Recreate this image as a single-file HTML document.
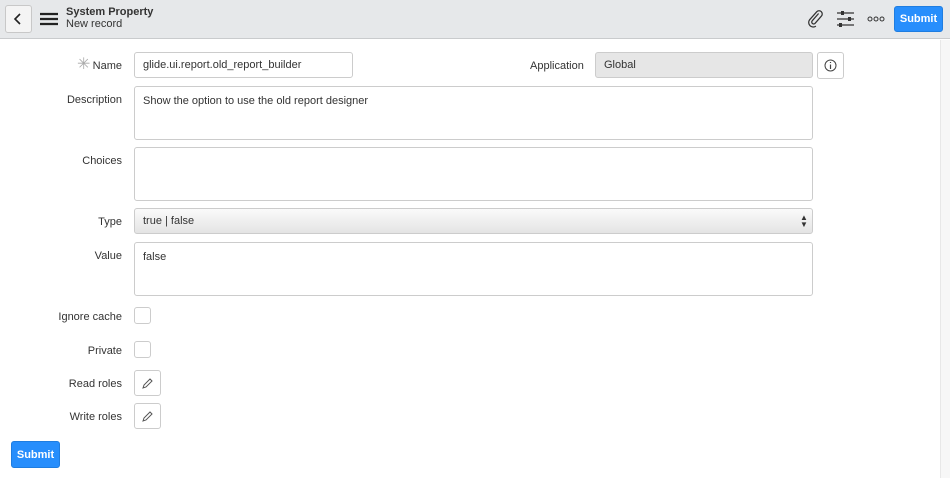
<!DOCTYPE html>
<html><head><style>
*{box-sizing:border-box;margin:0;padding:0}
body{width:950px;height:478px;background:#fff;font-family:"Liberation Sans",sans-serif;font-size:11px;color:#333;position:relative;overflow:hidden}
.a{position:absolute}
.hdr{left:0;top:0;width:950px;height:39px;background:#e6e8ea;border-bottom:1px solid #c9cbcd}
.lbl{right:828px;text-align:right;color:#333;white-space:nowrap}
.inp{border:1px solid #ccc;border-radius:3px;background:#fff;padding:0 8px}
.btn{background:#278efc;color:#fff;font-weight:bold;border:1px solid #1f7de0;border-radius:3px;text-align:center}
.cb{width:17px;height:17px;border:1px solid #ccc;border-radius:3px;background:#fff}
.rb{width:27px;height:26px;border:1px solid #ccc;border-radius:3px;background:#fff}
</style></head><body>
<div class="a hdr"></div>
<div class="a" style="left:5px;top:5px;width:27px;height:28px;border:1px solid #c8c8c8;border-radius:3px;background:#f4f4f4"></div>
<svg class="a" style="left:12px;top:12px" width="12" height="14"><path d="M8 2L3 7L8 12" stroke="#222" stroke-width="1.6" fill="none"/></svg>
<svg class="a" style="left:40px;top:12px" width="18" height="14"><path d="M0 2H18M0 7H18M0 12H18" stroke="#222" stroke-width="2.2"/></svg>
<div class="a" style="left:66px;top:6px;font-weight:bold;font-size:11px;color:#333">System Property</div>
<div class="a" style="left:66px;top:18px;font-size:11px;color:#333">New record</div>
<svg class="a" style="left:806px;top:9px" width="20" height="20"><path d="M14 5L7 13a2 2 0 0 0 3 3l7-8a3.5 3.5 0 0 0-5-5L4 12a5 5 0 0 0 7 7" stroke="#333" stroke-width="1.4" fill="none" transform="scale(.9)"/></svg>
<svg class="a" style="left:836px;top:11px" width="20" height="18"><path d="M1 2H18M1 8H18M1 14H18" stroke="#333" stroke-width="1.3"/><rect x="5" y="0" width="3" height="4" fill="#333"/><rect x="12" y="6" width="3" height="4" fill="#333"/><rect x="3" y="12" width="3" height="4" fill="#333"/></svg>
<svg class="a" style="left:867px;top:16px" width="18" height="6"><circle cx="3" cy="3" r="2" stroke="#333" fill="none"/><circle cx="9" cy="3" r="2" stroke="#333" fill="none"/><circle cx="15" cy="3" r="2" stroke="#333" fill="none"/></svg>
<div class="a btn" style="left:894px;top:6px;width:49px;height:26px;line-height:24px">Submit</div>
<div class="a" style="left:940px;top:40px;width:10px;height:438px;background:#f7f7f7;border-left:1px solid #e8e8e8"></div>

<div class="a" style="left:77px;top:58px;color:#aaa;font-size:16px;line-height:14px">✳</div>
<div class="a lbl" style="top:60px">Name</div>
<div class="a inp" style="left:134px;top:52px;width:219px;height:26px;line-height:25px">glide.ui.report.old_report_builder</div>
<div class="a" style="left:530px;top:60px">Application</div>
<div class="a inp" style="left:595px;top:52px;width:218px;height:26px;line-height:25px;background:#e6e6e6">Global</div>
<div class="a" style="left:817px;top:52px;width:27px;height:27px;border:1px solid #ccc;border-radius:3px"></div>
<svg class="a" style="left:824px;top:59px" width="13" height="13"><circle cx="6.5" cy="6.5" r="5.5" stroke="#444" fill="none"/><path d="M6.5 5.5V10M6.5 3V4" stroke="#444" stroke-width="1.2"/></svg>

<div class="a lbl" style="top:94px">Description</div>
<div class="a inp" style="left:134px;top:86px;width:679px;height:54px;padding-top:8px">Show the option to use the old report designer</div>
<div class="a lbl" style="top:155px">Choices</div>
<div class="a inp" style="left:134px;top:147px;width:679px;height:54px"></div>
<div class="a lbl" style="top:216px">Type</div>
<div class="a inp" style="left:134px;top:208px;width:679px;height:26px;line-height:25px;background:linear-gradient(#fafafa,#e4e4e4)">true | false</div>
<div class="a" style="left:800px;top:214px;font-size:8px;line-height:7px;color:#333">▲<br>▼</div>
<div class="a lbl" style="top:250px">Value</div>
<div class="a inp" style="left:134px;top:242px;width:679px;height:54px;padding-top:8px">false</div>

<div class="a lbl" style="top:311px">Ignore cache</div>
<div class="a cb" style="left:134px;top:307px"></div>
<div class="a lbl" style="top:345px">Private</div>
<div class="a cb" style="left:134px;top:341px"></div>
<div class="a lbl" style="top:378px">Read roles</div>
<div class="a rb" style="left:134px;top:370px"></div>
<svg class="a" style="left:142px;top:378px" width="11" height="11"><path d="M1 10L2 7L8 1L10 3L4 9Z" stroke="#555" fill="none"/></svg>
<div class="a lbl" style="top:411px">Write roles</div>
<div class="a rb" style="left:134px;top:403px"></div>
<svg class="a" style="left:142px;top:411px" width="11" height="11"><path d="M1 10L2 7L8 1L10 3L4 9Z" stroke="#555" fill="none"/></svg>
<div class="a btn" style="left:11px;top:441px;width:49px;height:27px;line-height:27px">Submit</div>
</body></html>
